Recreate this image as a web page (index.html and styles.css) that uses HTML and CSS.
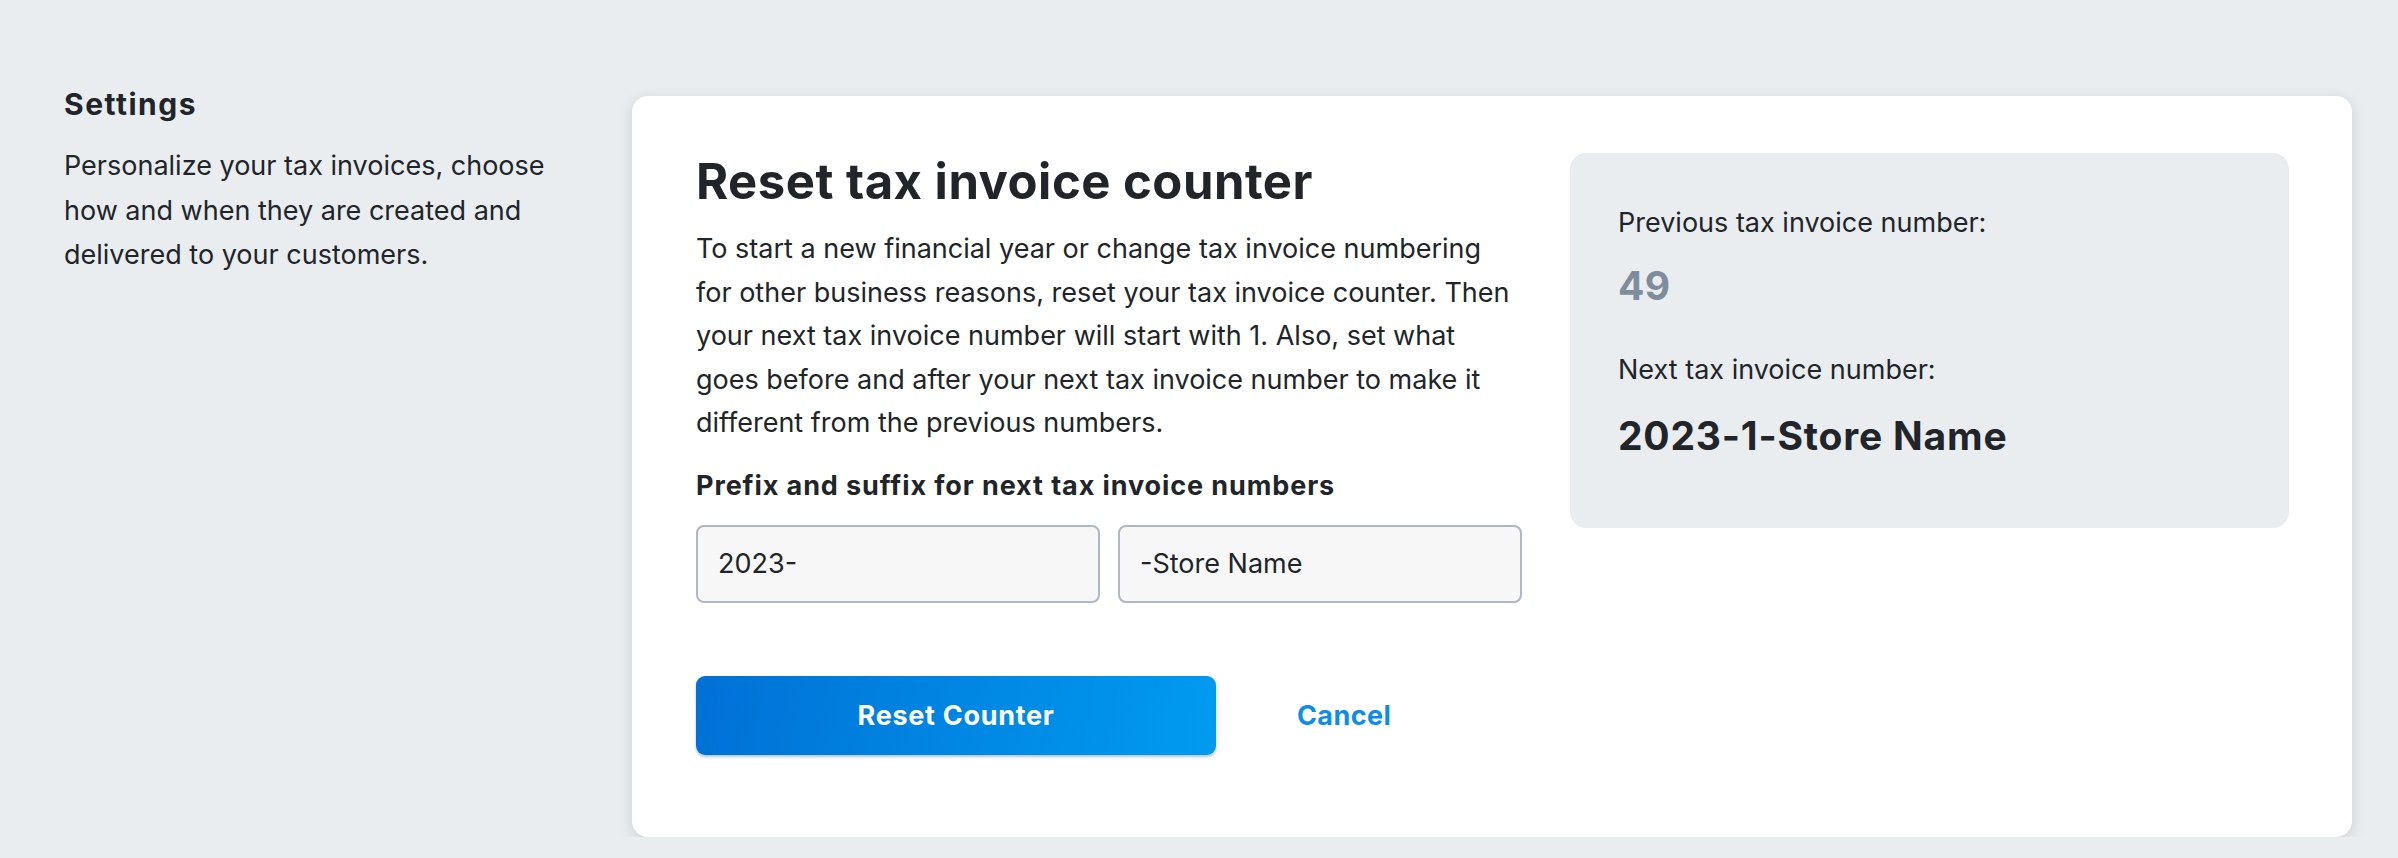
FILE: index.html
```html
<!DOCTYPE html>
<html lang="en">

<head>
    <meta charset="UTF-8">
    <meta name="viewport" content="width=device-width, initial-scale=1.0">
    <title>Tax invoice settings</title>
    <link rel="stylesheet" href="styles.css">
</head>

<body>
    <div class="page">
        <aside class="sidebar">
            <h2 class="sidebar-title">Settings</h2>
            <p class="sidebar-text">Personalize your tax invoices, choose how and when they are created and delivered to your customers.</p>
        </aside>

        <section class="card">
            <div class="card-main">
                <h1 class="card-title">Reset tax invoice counter</h1>
                <p class="card-text">To start a new financial year or change tax invoice numbering for other business reasons, reset your tax invoice counter. Then your next tax invoice number will start with 1. Also, set what goes before and after your next tax invoice number to make it different from the previous numbers.</p>

                <label class="field-label" for="prefix">Prefix and suffix for next tax invoice numbers</label>
                <div class="field-row">
                    <input type="text" id="prefix" name="prefix" value="2023-">
                    <input type="text" id="suffix" name="suffix" value="-Store Name">
                </div>

                <div class="actions">
                    <button class="btn-primary" onclick="resetCounter()">Reset Counter</button>
                    <button class="btn-link">Cancel</button>
                </div>
            </div>

            <div class="summary">
                <p class="summary-label">Previous tax invoice number:</p>
                <p class="summary-prev" id="prevNumber">49</p>
                <p class="summary-label summary-label-next">Next tax invoice number:</p>
                <p class="summary-next" id="nextNumber">2023-1-Store Name</p>
            </div>
        </section>
    </div>

    <script>
        function updatePreview() {
            let prefix = document.querySelector("#prefix").value;
            let suffix = document.querySelector("#suffix").value;
            document.querySelector("#nextNumber").textContent = prefix + "1" + suffix;
        }
        function resetCounter() {
            updatePreview();
        }
        document.querySelector("#prefix").addEventListener("input", updatePreview);
        document.querySelector("#suffix").addEventListener("input", updatePreview);
    </script>
</body>

</html>
```

FILE: styles.css
```css
/* Reset some default styles */
body,
h1,
h2,
p {
    margin: 0;
    padding: 0;
}

body {
    font-family: Inter, "Noto Sans", sans-serif;
    background-color: #e9edf0;
    color: #212529;
}

.page {
    display: flex;
    align-items: flex-start;
    padding: 96px 46px 0 64px;
}

/* Left column */
.sidebar {
    flex: 0 0 504px;
    margin-right: 64px;
    margin-top: -10px;
}

.sidebar-title {
    font-size: 30px;
    font-weight: 700;
    line-height: 36px;
    letter-spacing: 1.5px;
    margin-bottom: 22px;
}

.sidebar-text {
    font-size: 27px;
    line-height: 44.5px;
}

/* Card */
.card {
    flex: 1;
    display: grid;
    grid-template-columns: 826px 1fr;
    gap: 48px;
    align-items: start;
    background-color: #fff;
    border-radius: 16px;
    padding: 57px 63px 82px 64px;
    box-shadow: 0 4px 16px rgba(0, 0, 0, 0.13);
}

.card-title {
    font-size: 49px;
    font-weight: 700;
    line-height: 58px;
    letter-spacing: 0.5px;
}

.card-text {
    margin-top: 16px;
    font-size: 27px;
    line-height: 43.5px;
}

.field-label {
    display: block;
    margin-top: 23px;
    font-size: 27px;
    font-weight: 700;
    line-height: 36px;
    letter-spacing: 0.9px;
}

.field-row {
    display: flex;
    gap: 18px;
    margin-top: 21px;
}

.field-row input {
    flex: 1;
    min-width: 0;
    height: 78px;
    box-sizing: border-box;
    padding: 0 20px;
    font-family: Inter, sans-serif;
    font-size: 27px;
    color: #212529;
    background-color: #f7f7f7;
    border: 2px solid #aeb7c2;
    border-radius: 8px;
}

.actions {
    display: flex;
    align-items: center;
    margin-top: 73px;
}

.btn-primary {
    width: 520px;
    height: 79px;
    border: none;
    border-radius: 9px;
    background: linear-gradient(100deg, #0071d6, #009bf0);
    box-shadow: 0 2px 3px rgba(0, 60, 140, 0.3);
    color: #fff;
    font-family: Inter, sans-serif;
    font-size: 27px;
    font-weight: 700;
    letter-spacing: 0.7px;
    cursor: pointer;
}

.btn-link {
    margin-left: 81px;
    padding: 0;
    border: none;
    background: none;
    color: #0b8de9;
    font-family: Inter, sans-serif;
    font-size: 27px;
    font-weight: 700;
    letter-spacing: 0.4px;
    cursor: pointer;
}

/* Summary panel */
.summary {
    background-color: #e9edf0;
    border-radius: 16px;
    padding: 48px 48px 70px;
}

.summary-label {
    font-size: 27px;
    line-height: 44px;
}

.summary-label-next {
    margin-top: 40px;
}

.summary-prev {
    margin-top: 19px;
    font-size: 39px;
    font-weight: 700;
    line-height: 44px;
    letter-spacing: 0.5px;
    color: #7f8c9b;
}

.summary-next {
    margin-top: 22px;
    font-size: 39px;
    font-weight: 700;
    line-height: 44px;
    letter-spacing: 0.8px;
}
```
